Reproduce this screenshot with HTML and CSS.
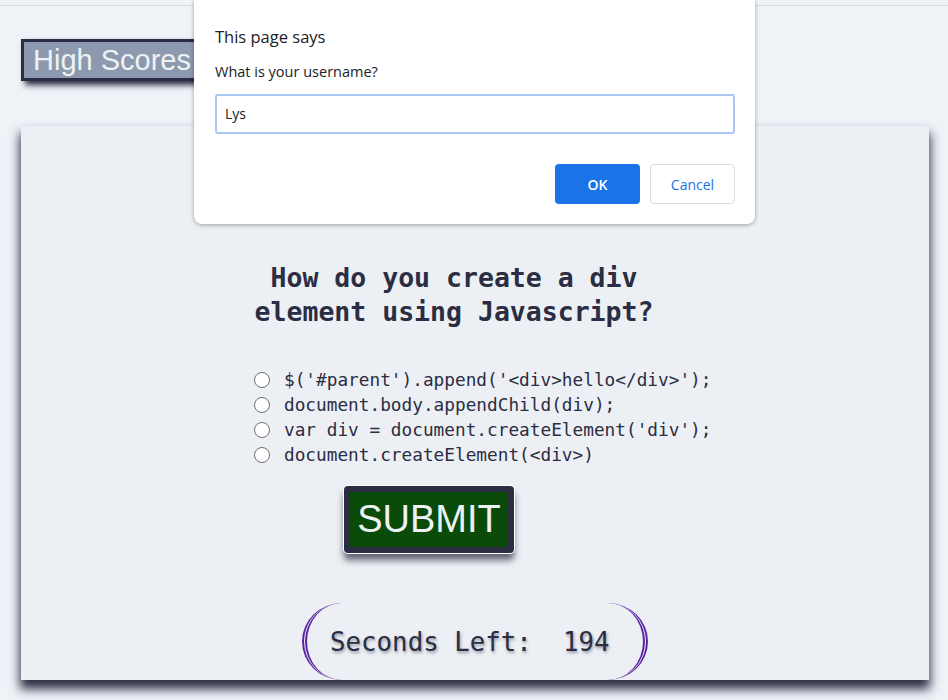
FILE: index.html
```html
<!DOCTYPE html>
<html lang="en">
<head>
<meta charset="utf-8">
<title>Quiz</title>
<link rel="stylesheet" href="styles.css">
</head>
<body>
<div class="topbar"></div>
<button class="scores-btn">High Scores</button>
<main class="card">
  <section class="quiz">
    <h2 class="question">How do you create a div element using Javascript?</h2>
    <ul class="options">
      <li class="option"><input type="radio" name="ans" class="radio"><span>$('#parent').append('&lt;div&gt;hello&lt;/div&gt;');</span></li>
      <li class="option"><input type="radio" name="ans" class="radio"><span>document.body.appendChild(div);</span></li>
      <li class="option"><input type="radio" name="ans" class="radio"><span>var div = document.createElement('div');</span></li>
      <li class="option"><input type="radio" name="ans" class="radio"><span>document.createElement(&lt;div&gt;)</span></li>
    </ul>
    <button class="submit-btn">SUBMIT</button>
  </section>
  <div class="timer">Seconds Left:  194</div>
</main>

<div class="dialog">
  <div class="dialog-title">This page says</div>
  <div class="dialog-msg">What is your username?</div>
  <div class="dialog-input">Lys</div>
  <div class="dialog-actions">
    <button class="btn-ok">OK</button>
    <button class="btn-cancel">Cancel</button>
  </div>
</div>
</body>
</html>
```
FILE: styles.css
```css
html, body {
  margin: 0;
  padding: 0;
}
body {
  background: #eff3f8;
  width: 948px;
  height: 700px;
  overflow: hidden;
  position: relative;
  font-family: "Liberation Sans", Arial, sans-serif;
}
.topbar {
  height: 5px;
  border-bottom: 1px solid #d9dce2;
}
.scores-btn {
  display: block;
  margin: 33px 0 0 21px;
  height: 42px;
  padding: 0 9px;
  border: 3px solid #2b2d42;
  background: #8d99ae;
  color: #edf2f4;
  font-family: "Liberation Sans", Arial, sans-serif;
  font-size: 29px;
  line-height: 36px;
  box-shadow: 4px 4px 6px #2b2d42;
}
.card {
  margin: 45px 19px 0 21px;
  width: 908px;
  background: #ecf0f4;
  box-shadow: 0 8px 10px 1px #2b2d42;
  display: flex;
  flex-direction: column;
  padding-top: 135px;
  box-sizing: border-box;
}
.quiz {
  margin-left: 233px;
  width: 400px;
  display: flex;
  flex-direction: column;
}
.question {
  margin: 0;
  text-align: center;
  font-family: "DejaVu Sans Mono", "Liberation Mono", monospace;
  font-weight: bold;
  font-size: 26.5px;
  line-height: 34px;
  color: #2b2d42;
}
.options {
  list-style: none;
  margin: 38px 0 0 0;
  padding: 0;
}
.option {
  display: flex;
  align-items: center;
  height: 25px;
  white-space: nowrap;
  font-family: "DejaVu Sans Mono", "Liberation Mono", monospace;
  font-size: 17.75px;
  color: #2b2d42;
}
.radio {
  appearance: none;
  -webkit-appearance: none;
  width: 16px;
  height: 16px;
  margin: 0 14px 0 0;
  border: 1px solid #6e6e6e;
  border-radius: 50%;
  background: #fff;
  flex: none;
}
.submit-btn {
  align-self: flex-start;
  margin: 19px 0 0 90px;
  width: 170px;
  height: 67px;
  padding: 0;
  border: 6px solid #2b2d42;
  border-radius: 4px;
  background: #0a4b09;
  color: #edf2f4;
  font-family: "Liberation Sans", Arial, sans-serif;
  font-size: 38px;
  line-height: 55px;
  box-shadow: 0 0 0 1px #ffffff, 0 7px 7px rgba(43, 45, 66, 0.75);
}
.timer {
  align-self: flex-start;
  margin: 50px 0 0 281px;
  width: 346px;
  height: 77px;
  box-sizing: border-box;
  border-left: 5px double #5a22a3;
  border-right: 5px double #5a22a3;
  border-radius: 40px / 50%;
  display: flex;
  align-items: center;
  justify-content: flex-start;
  padding-left: 23px;
  font-family: "DejaVu Sans Mono", "Liberation Mono", monospace;
  font-size: 25.8px;
  color: #2b2d42;
  text-shadow: 1px 2px 3px rgba(43, 45, 66, 0.45);
  white-space: pre;
}
.dialog {
  position: absolute;
  left: 194px;
  top: 0;
  width: 561px;
  height: 224px;
  box-sizing: border-box;
  background: #fff;
  border-radius: 0 0 8px 8px;
  box-shadow: 0 1px 4px rgba(0, 0, 0, 0.35);
  padding: 0 20px 0 21px;
  font-family: "Open Sans", "Noto Sans", sans-serif;
  color: #202124;
  display: flex;
  flex-direction: column;
}
.dialog-title {
  margin-top: 25px;
  font-size: 16.5px;
  line-height: 24px;
}
.dialog-msg {
  margin-top: 13px;
  font-size: 14.5px;
  line-height: 20px;
}
.dialog-input {
  margin-top: 12px;
  height: 40px;
  box-sizing: border-box;
  border: 2px solid #a8c7f5;
  border-radius: 3px;
  padding: 0 8px;
  font-size: 14px;
  line-height: 36px;
}
.dialog-actions {
  margin-top: 30px;
  display: flex;
  justify-content: flex-end;
  gap: 10px;
}
.btn-ok, .btn-cancel {
  width: 85px;
  height: 40px;
  border-radius: 4px;
  font-family: "Open Sans", "Noto Sans", sans-serif;
  font-size: 14px;
  padding: 0;
}
.btn-ok {
  background: #1a73e8;
  border: none;
  color: #fff;
  font-weight: 600;
}
.btn-cancel {
  background: #fff;
  border: 1px solid #dadce0;
  color: #1a73e8;
}
```
